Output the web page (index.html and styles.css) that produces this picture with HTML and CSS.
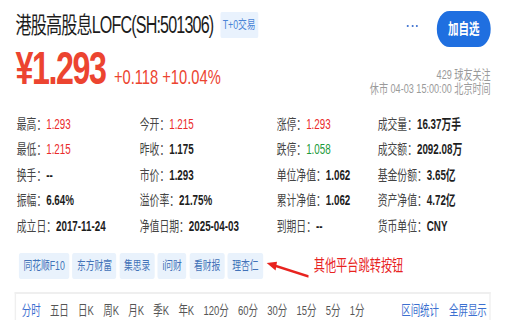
FILE: index.html
```html
<!DOCTYPE html>
<html lang="zh-CN">
<head>
<meta charset="utf-8">
<link rel="stylesheet" href="styles.css">
</head>
<body>
<div class="frame">
<div class="page">
  <div class="header">
    <div class="title-group">
      <div class="title">港股高股息LOFC(SH:501306)</div>
      <div class="badge">T+0交易</div>
    </div>
    <div class="actions">
      <div class="dots"><span></span><span></span><span></span></div>
      <div class="follow-btn">加自选</div>
    </div>
  </div>

  <div class="price-row">
    <div class="price-group">
      <div class="price">¥1.293</div>
      <div class="change">+0.118 +10.04%</div>
    </div>
    <div class="meta">
      <div>429 球友关注</div>
      <div>休市 04-03 15:00:00 北京时间</div>
    </div>
  </div>

  <div class="grid">
    <div class="cell"><span class="label">最高：</span><span class="val up">1.293</span></div>
    <div class="cell"><span class="label">今开：</span><span class="val up">1.215</span></div>
    <div class="cell"><span class="label">涨停：</span><span class="val up">1.293</span></div>
    <div class="cell"><span class="label">成交量：</span><span class="val">16.37万手</span></div>

    <div class="cell"><span class="label">最低：</span><span class="val up">1.215</span></div>
    <div class="cell"><span class="label">昨收：</span><span class="val">1.175</span></div>
    <div class="cell"><span class="label">跌停：</span><span class="val down">1.058</span></div>
    <div class="cell"><span class="label">成交额：</span><span class="val">2092.08万</span></div>

    <div class="cell"><span class="label">换手：</span><span class="val">--</span></div>
    <div class="cell"><span class="label">市价：</span><span class="val">1.293</span></div>
    <div class="cell"><span class="label">单位净值：</span><span class="val">1.062</span></div>
    <div class="cell"><span class="label">基金份额：</span><span class="val">3.65亿</span></div>

    <div class="cell"><span class="label">振幅：</span><span class="val">6.64%</span></div>
    <div class="cell"><span class="label">溢价率：</span><span class="val">21.75%</span></div>
    <div class="cell"><span class="label">累计净值：</span><span class="val">1.062</span></div>
    <div class="cell"><span class="label">资产净值：</span><span class="val">4.72亿</span></div>

    <div class="cell"><span class="label">成立日：</span><span class="val">2017-11-24</span></div>
    <div class="cell"><span class="label">净值日期：</span><span class="val">2025-04-03</span></div>
    <div class="cell"><span class="label">到期日：</span><span class="val">--</span></div>
    <div class="cell"><span class="label">货币单位：</span><span class="val">CNY</span></div>
  </div>

  <div class="links-row">
    <div class="links">
      <span class="link">同花顺F10</span>
      <span class="link">东方财富</span>
      <span class="link">集思录</span>
      <span class="link">i问财</span>
      <span class="link">看财报</span>
      <span class="link">理杏仁</span>
    </div>
    <svg class="arrow" width="61" height="26" viewBox="0 0 61 26">
      <polygon points="1,10 13.7,17.5 15.7,8.7" fill="#e8231f"/>
      <line x1="14.2" y1="13" x2="61" y2="23.5" stroke="#e8231f" stroke-width="2.6"/>
    </svg>
    <span class="note">其他平台跳转按钮</span>
  </div>

  <div class="chart-box">
    <div class="tabs">
      <span class="tab active">分时</span>
      <span class="tab">五日</span>
      <span class="tab">日K</span>
      <span class="tab">周K</span>
      <span class="tab">月K</span>
      <span class="tab">季K</span>
      <span class="tab">年K</span>
      <span class="tab">120分</span>
      <span class="tab">60分</span>
      <span class="tab">30分</span>
      <span class="tab">15分</span>
      <span class="tab">5分</span>
      <span class="tab">1分</span>
      <div class="tab-tools">
        <span class="tool">区间统计</span>
        <span class="tool">全屏显示</span>
      </div>
    </div>
  </div>
</div>
</div>
</body>
</html>
```
FILE: styles.css
```css
html, body {
  margin: 0;
  padding: 0;
  background: #ffffff;
  overflow: hidden;
}

body {
  width: 512px;
  height: 320px;
  font-family: "Liberation Sans", "Noto Sans CJK SC", sans-serif;
  color: #222;
}

.frame {
  width: 512px;
  height: 320px;
  overflow: hidden;
}

.page {
  width: 731px;
  height: 320px;
  box-sizing: border-box;
  padding: 0 30px 0 22px;
  transform: scaleX(0.7);
  transform-origin: 0 0;
}

/* header */
.header {
  display: flex;
  align-items: flex-start;
  padding-top: 11px;
  height: 36px;
}

.title-group {
  display: flex;
  align-items: center;
  height: 28px;
}

.title {
  font-size: 23px;
  line-height: 28px;
  letter-spacing: -1.2px;
  color: #1c1c1c;
  white-space: nowrap;
}

.badge {
  margin-left: 10px;
  height: 26px;
  line-height: 26px;
  padding: 0 3.5px;
  font-size: 12.5px;
  color: #4a84d6;
  background: #e9f2fd;
  border-radius: 2px;
  white-space: nowrap;
}

.actions {
  margin-left: auto;
  display: flex;
  align-items: center;
  height: 36px;
}

.dots {
  display: flex;
  gap: 3.5px;
  margin-right: 27px;
  margin-bottom: 6px;
}

.dots span {
  width: 3px;
  height: 2px;
  border-radius: 50%;
  background: #3a6fcf;
}

.follow-btn {
  width: 77px;
  height: 36px;
  line-height: 36px;
  text-align: center;
  border-radius: 18px;
  background: #1f6fe0;
  color: #ffffff;
  font-size: 15px;
  font-weight: bold;
}

/* price */
.price-row {
  display: flex;
  align-items: flex-end;
  justify-content: space-between;
  margin-top: 7px;
  height: 46px;
}

.price-group {
  display: flex;
  align-items: baseline;
}

.price {
  font-size: 46px;
  line-height: 46px;
  font-weight: bold;
  letter-spacing: -2px;
  color: #ec4430;
}

.change {
  margin-left: 12px;
  font-size: 21px;
  line-height: 46px;
  color: #ec4430;
}

.meta {
  text-align: right;
  font-size: 13px;
  line-height: 14px;
  color: #9a9a9a;
  margin-bottom: 4px;
}

/* data grid */
.grid {
  display: grid;
  grid-template-columns: 175.7px 195.7px 144.3px 1fr;
  margin-top: 12px;
  margin-left: 2px;
  font-size: 14px;
  line-height: 25.4px;
}

.cell {
  white-space: nowrap;
}

.label {
  color: #444;
}

.val {
  color: #1e1e1e;
  font-weight: bold;
}

.val.up {
  color: #ea2a2a;
  font-weight: normal;
}

.val.down {
  color: #1c9a3a;
  font-weight: normal;
}

/* link buttons */
.links-row {
  display: flex;
  align-items: center;
  margin-top: 13.7px;
  margin-left: 5px;
  height: 26.3px;
}

.links {
  display: flex;
  gap: 4.3px;
}

.link {
  display: block;
  height: 26.3px;
  line-height: 26.3px;
  padding: 0 6.5px;
  font-size: 12.5px;
  color: #4272b8;
  background: #e9f2fc;
  border-radius: 3px;
  white-space: nowrap;
}

.arrow {
  display: block;
  margin-left: 3.8px;
}

.note {
  margin-left: 7.5px;
  font-size: 16px;
  line-height: 20px;
  color: #e8231f;
  white-space: nowrap;
}

/* chart box */
.chart-box {
  margin-top: 13px;
  margin-left: -0.6px;
  width: 680px;
  height: 28px;
  box-sizing: border-box;
  border: 2px solid #efefef;
  border-bottom: none;
  padding: 8px 4px 0 7.6px;
}

.tabs {
  display: flex;
  gap: 13.3px;
  font-size: 13.5px;
  line-height: 17px;
  color: #555;
  white-space: nowrap;
}

.tab.active {
  color: #3b6fd0;
}

.tab-tools {
  margin-left: auto;
  display: flex;
  gap: 14.3px;
  color: #3b6fd0;
}
```
